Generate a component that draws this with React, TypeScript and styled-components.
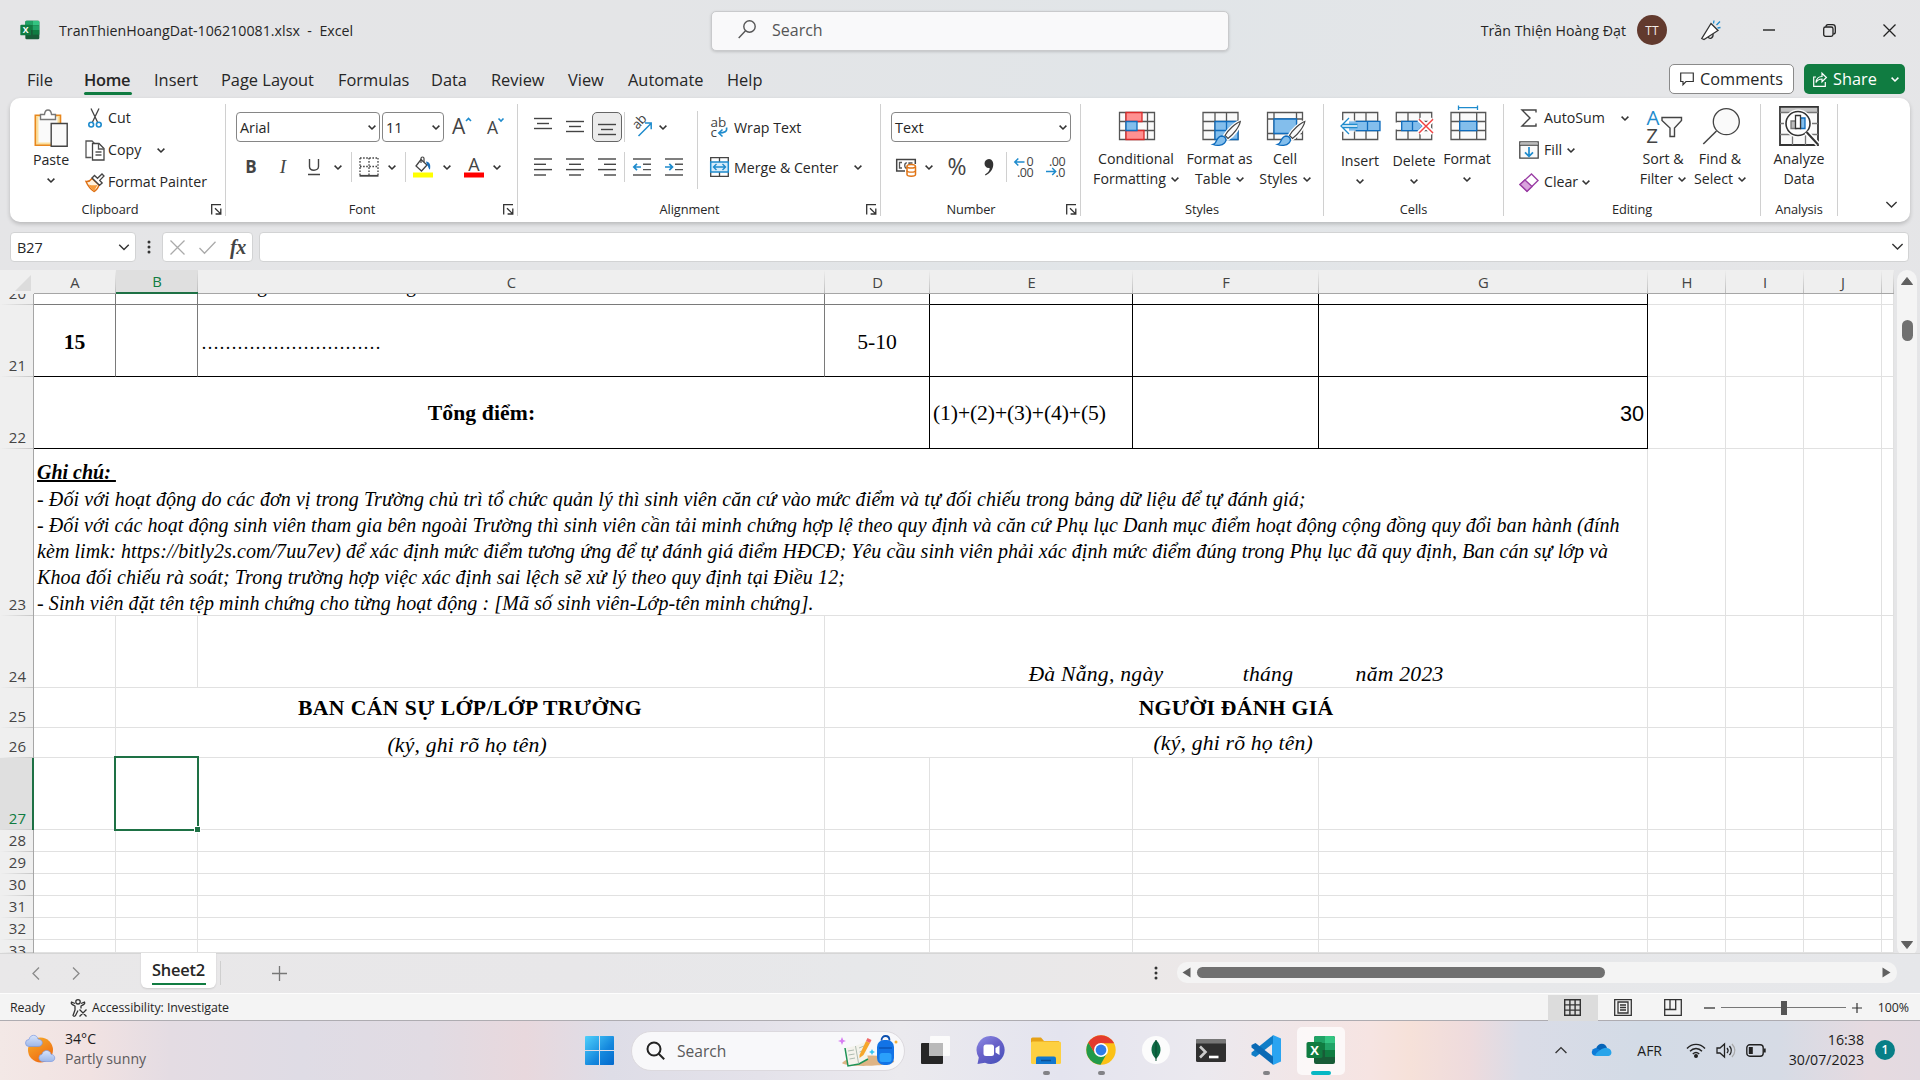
import React from "react";
import styled, { createGlobalStyle, css } from "styled-components";

const UI = `"Open Sans", "Noto Sans", sans-serif`;
const SERIF = `"Liberation Serif", "Times New Roman", serif`;
const SANS = `"Liberation Sans", Arial, sans-serif`;
const GREEN = "#107c41";
const INK = "#262626";
const BLUE = "#1e8bcd";
const FILL_BLUE = "#83beec";
const EDGE_BLUE = "#0f6cbd";

const GlobalStyle = createGlobalStyle`
  *, *::before, *::after { box-sizing: border-box; }
  body { margin: 0; background: #e5e6e8; overflow: hidden; }
  svg { display: block; flex: none; overflow: visible; }
`;

const Screen = styled.div`
  width: 1920px;
  height: 1080px;
  display: flex;
  flex-direction: column;
  font-family: ${UI};
  color: ${INK};
  background: linear-gradient(100deg, #e5e5e7 0%, #e4e5e7 30%, #e1e5e8 55%, #e5e6e8 80%, #e5e5e7 100%);
`;

/* ---------- shared pieces ---------- */

const Slot = styled.div<{ $w: number }>`
  width: ${(p) => p.$w}px;
  flex: none;
  height: 30px;
  display: flex;
  align-items: center;
  justify-content: center;
`;

type ChevronProps = { size?: number; color?: string; w?: number; up?: boolean };

const Chevron = ({ size = 8, color = "#333", w = 1.5, up }: ChevronProps) => (
  <svg width={size} height={size / 2 + 1} viewBox="0 0 8 5" fill="none" stroke={color} strokeWidth={(w * 8) / size}>
    <path d={up ? "M0.6 4.4 4 1 7.4 4.4" : "M0.6 0.6 4 4 7.4 0.6"} />
  </svg>
);

/* ---------- title bar ---------- */

const TitleBar = styled.header`
  height: 62px;
  flex: none;
  display: grid;
  grid-template-columns: 711px 518px 1fr;
  align-items: center;
  padding-bottom: 2px;
`;

const FileName = styled.div`
  display: flex;
  align-items: center;
  gap: 19px;
  padding-left: 20px;
  font-size: 14.2px;
  letter-spacing: 0.03px;
  white-space: pre;
`;

const SearchBox = styled.div`
  height: 40px;
  margin-top: 1px;
  display: flex;
  align-items: center;
  gap: 16px;
  padding: 0 0 2px 26px;
  border: 1px solid #c9cacc;
  border-radius: 5px;
  background: #f9f9fa;
  box-shadow: 0 1px 3px rgba(0, 0, 0, 0.16);
  font-size: 16px;
  color: #555;
`;

const WindowTools = styled.div`
  display: flex;
  align-items: center;
  justify-content: flex-end;
  font-size: 14.2px;
  letter-spacing: 0.04px;
  padding-right: 24px;
`;

const Avatar = styled.span`
  width: 30px;
  height: 30px;
  margin: 0 34px 0 11px;
  border-radius: 50%;
  background: #623a2e;
  color: #f4ece8;
  font-size: 12px;
  display: flex;
  align-items: center;
  justify-content: center;
`;

const WindowButton = styled.span<{ $gap: number }>`
  display: flex;
  margin-left: ${(p) => p.$gap}px;
`;

/* ---------- tab strip ---------- */

const TabStrip = styled.nav`
  height: 36px;
  flex: none;
  display: flex;
  align-items: flex-start;
  padding: 2px 15px 0 27px;
`;

const Tab = styled.span<{ $active?: boolean; $w: number }>`
  width: ${(p) => p.$w}px;
  height: 32px;
  padding-top: 5px;
  font-size: 16.4px;
  line-height: 22px;
  white-space: nowrap;
  font-weight: ${(p) => (p.$active ? 600 : 400)};
  letter-spacing: ${(p) => (p.$active ? "-0.3px" : "0")};
  ${(p) =>
    p.$active &&
    css`
      &::after {
        content: "";
        display: block;
        width: 48px;
        height: 3px;
        margin-top: 1px;
        border-radius: 2px;
        background: ${GREEN};
      }
    `}
`;

const CommentsButton = styled.button`
  width: 125px;
  height: 30px;
  margin: 0 10px 0 auto;
  padding: 0;
  display: flex;
  align-items: center;
  justify-content: center;
  gap: 6px;
  border: 1px solid #8a8a8a;
  border-radius: 5px;
  background: #fff;
  color: ${INK};
  font: 16.3px ${UI};
`;

const ShareButton = styled(CommentsButton)`
  width: 101px;
  margin: 0;
  padding-left: 3px;
  border: 0;
  background: ${GREEN};
  color: #fff;
  & > svg:last-child { margin-left: 8px; }
`;

/* ---------- ribbon ---------- */

const Ribbon = styled.section`
  height: 124px;
  flex: none;
  margin: 0 10px;
  padding-top: 6px;
  display: flex;
  border-radius: 10px;
  background: #fff;
  box-shadow: 0 2px 4px rgba(0, 0, 0, 0.2);
  font-size: 14.2px;
`;

const Group = styled.div<{ $w: number }>`
  width: ${(p) => p.$w}px;
  height: 112px;
  flex: none;
  display: flex;
  flex-direction: column;
  border-right: 1px solid #d0d0d0;
`;

const GroupBody = styled.div<{ $pl?: number }>`
  height: 97px;
  flex: none;
  display: flex;
  padding-left: ${(p) => p.$pl ?? 0}px;
`;

const GroupFooter = styled.div<{ $pl?: number }>`
  display: flex;
  height: 15px;
  align-items: center;
  padding-left: ${(p) => p.$pl ?? 0}px;
  font-size: 12.8px;
  letter-spacing: -0.1px;
  line-height: 15px;
  span { flex: 1; text-align: center; padding-top: 2px; }
  svg { margin: 2px 3px 0 5px; }
`;

const Stack = styled.div`
  padding-top: 8px;
  display: flex;
  flex-direction: column;
  gap: 10px;
`;

const Line = styled.div`
  height: 30px;
  display: flex;
  align-items: center;
  white-space: nowrap;
`;

const SmallList = styled.div<{ $w?: number }>`
  width: ${(p) => (p.$w ? p.$w + "px" : "auto")};
  display: flex;
  flex-direction: column;
  gap: 4px;
`;

const SmallRow = styled.div<{ $gap: number; $chev?: number }>`
  height: 28px;
  display: flex;
  align-items: center;
  white-space: nowrap;
  & > span { margin-left: ${(p) => p.$gap}px; padding-bottom: 2px; }
  & > span + svg { margin-left: ${(p) => p.$chev ?? 8}px; }
`;

const IconBox = styled.div`
  width: 22px;
  display: flex;
  justify-content: center;
`;

const BigButton = styled.div<{ $w: number; $drop?: number }>`
  width: ${(p) => p.$w}px;
  flex: none;
  display: flex;
  flex-direction: column;
  align-items: center;
  line-height: 20px;
  white-space: nowrap;
  & > svg:first-child { margin-bottom: ${(p) => 1 + (p.$drop ?? 0)}px; }
`;

const BigLine = styled.span`
  height: 20px;
  display: flex;
  align-items: center;
  gap: 5px;
`;

const Combo = styled.div<{ $w: number }>`
  width: ${(p) => p.$w}px;
  height: 30px;
  display: flex;
  align-items: center;
  justify-content: space-between;
  padding: 0 3px 0 3px;
  border: 1px solid #868686;
  border-radius: 4px;
  font-size: 14.4px;
  & + & { margin-left: 2px; }
`;

const Divider = styled.i<{ $h?: number }>`
  width: 1px;
  height: ${(p) => p.$h ?? 30}px;
  background: #d0d0d0;
`;

const TallDivider = styled(Slot)`
  height: 92px;
`;

const Pressed = styled.div`
  width: 30px;
  height: 30px;
  display: flex;
  align-items: center;
  justify-content: center;
  border: 1px solid #666;
  border-radius: 5px;
  background: #ebebeb;
`;

const Glyph = styled.span<{ $size: number; $weight?: number; $italic?: boolean; $serif?: boolean }>`
  font-family: ${(p) => (p.$serif ? SERIF : UI)};
  font-size: ${(p) => p.$size}px;
  font-weight: ${(p) => p.$weight ?? 400};
  font-style: ${(p) => (p.$italic ? "italic" : "normal")};
  line-height: 1;
  color: #444;
  padding-bottom: 2px;
`;

const CollapseSpot = styled.div`
  flex: 1;
  display: flex;
  align-items: flex-end;
  justify-content: flex-end;
  padding: 0 12px 14px 0;
`;

/* ---------- formula bar ---------- */

const FormulaBar = styled.div`
  height: 48px;
  flex: none;
  display: flex;
  padding: 10px 11px 0 10px;
`;

const Field = styled.div<{ $w?: number }>`
  ${(p) => (p.$w ? `width: ${p.$w}px;` : "flex: 1;")}
  height: 30px;
  display: flex;
  align-items: center;
  border: 1px solid #d2d3d4;
  border-radius: 4px;
  background: #fff;
`;

const NameBox = styled(Field)`
  justify-content: space-between;
  padding: 0 5px 0 6px;
  font-size: 14.4px;
`;

const FxBox = styled(Field)`
  padding-left: 7px;
  margin-right: 6px;
  gap: 14px;
`;

const FormulaInput = styled(Field)`
  justify-content: flex-end;
  padding-right: 4px;
`;

const Fx = styled.span`
  font: italic 700 20px ${SERIF};
  letter-spacing: -0.5px;
  color: #444;
`;

/* ---------- sheet ---------- */

const Workspace = styled.div`
  height: 683px;
  flex: none;
  display: flex;
`;

const COLS = [34, 82, 82, 627, 105, 203, 186, 329, 78, 78, 78, 12];
const ROWS = [24, 11, 72, 72, 167, 72, 40, 30, 72, 22, 22, 22, 22, 22, 13];

const Sheet = styled.div`
  width: 1894px;
  flex: none;
  display: grid;
  grid-template-columns: ${COLS.map((c) => c + "px").join(" ")};
  grid-template-rows: ${ROWS.map((r) => r + "px").join(" ")};
  background: #fff;
`;

const ColHead = styled.div<{ $on?: boolean }>`
  display: flex;
  align-items: center;
  justify-content: center;
  font-size: 14.8px;
  line-height: 20px;
  color: ${(p) => (p.$on ? GREEN : "#444")};
  background:
    linear-gradient(to bottom, transparent, #bdbdbd) right / 1px 100% no-repeat,
    ${(p) => (p.$on ? "#dfdfdf" : "#efefef")};
  border-bottom: ${(p) => (p.$on ? "2px solid #1e7145" : "1px solid #a6a6a6")};
`;

const RowHead = styled.div<{ $on?: boolean; $top?: boolean }>`
  grid-column: 1;
  display: flex;
  align-items: ${(p) => (p.$top ? "flex-start" : "flex-end")};
  justify-content: flex-end;
  overflow: hidden;
  padding-right: ${(p) => (p.$on ? 6 : 7)}px;
  padding-bottom: ${(p) => (p.$top ? 0 : 2)}px;
  font-size: 15px;
  line-height: 20px;
  color: ${(p) => (p.$on ? GREEN : "#444")};
  background:
    linear-gradient(to right, transparent, #c6c6c6) bottom / 100% 1px no-repeat,
    ${(p) => (p.$on ? "#dfdfdf" : "#efefef")};
  border-right: ${(p) => (p.$on ? "2px solid #1e7145" : "1px solid #a6a6a6")};
`;

const Corner = styled.div`
  display: flex;
  align-items: flex-end;
  justify-content: flex-end;
  padding: 0 3px 3px 0;
  background: #efefef;
`;

type CellProps = {
  $c: number;
  $r: number;
  $span?: number;
  $right?: string;
  $bottom?: string;
  $font?: string;
  $align?: string;
  $valign?: string;
  $track?: number;
  $pt?: number;
};

const Cell = styled.div<CellProps>`
  grid-column: ${(p) => p.$c} / span ${(p) => p.$span ?? 1};
  grid-row: ${(p) => p.$r};
  position: relative;
  min-width: 0;
  display: flex;
  align-items: ${(p) => p.$valign ?? "center"};
  justify-content: ${(p) => p.$align ?? "center"};
  padding: ${(p) => p.$pt ?? 0}px 3px 0;
  border-right: 1px solid ${(p) => p.$right ?? "#e1e1e1"};
  border-bottom: 1px solid ${(p) => p.$bottom ?? "#e1e1e1"};
  font: ${(p) => p.$font ?? `21.67px ${SERIF}`};
  letter-spacing: ${(p) => p.$track ?? 0}px;
  color: #000;
  white-space: pre;
`;

const Notes = styled.div`
  align-self: flex-end;
  margin-bottom: -1px;
  font: italic 20px/26px ${SERIF};
`;

const NoteTitle = styled.p`
  margin: 0;
  font-weight: 700;
  line-height: 28px;
  text-decoration: underline;
`;

const NoteLine = styled.p<{ $track: number }>`
  margin: 0;
  letter-spacing: ${(p) => p.$track}px;
`;

const ClippedText = styled.div`
  align-self: flex-start;
  height: 3px;
  overflow: hidden;
  display: flex;
  align-items: flex-end;
  gap: 139px;
  padding-left: 56px;
  font-size: 20px;
  line-height: 24px;
  margin-right: auto;
`;

const Selection = styled.div`
  position: absolute;
  left: -2px;
  top: -2px;
  width: 85px;
  height: 75px;
  border: 2px solid #1e7145;
  &::after {
    content: "";
    position: absolute;
    right: -4px;
    bottom: -4px;
    width: 7px;
    height: 7px;
    border: 1px solid #fff;
    background: #1e7145;
  }
`;

const VScroll = styled.div`
  width: 20px;
  height: 687px;
  margin-left: 3px;
  padding: 7px 0 8px;
  display: flex;
  flex-direction: column;
  align-items: center;
  border-radius: 10px;
  background: #f4f4f4;
`;

const VThumb = styled.i`
  width: 11px;
  height: 21px;
  margin: 35px 0 auto;
  border-radius: 6px;
  background: #707070;
`;

/* ---------- sheet tabs ---------- */

const SheetBar = styled.div`
  height: 40px;
  flex: none;
  display: flex;
  padding-right: 23px;
  border-top: 1px solid #d6d6d6;
  background: linear-gradient(90deg, #e9e8e9, #e8e7e9 30%, #e7e8ea 45%, #ece8e8 63%, #e7e8ea 78%, #e6e7ea);
`;

const SheetNav = styled.div`
  width: 141px;
  display: flex;
  align-items: center;
  gap: 32px;
  padding-left: 32px;
`;

const SheetTab = styled.div`
  width: 75px;
  height: 35px;
  margin-top: -1px;
  display: flex;
  flex-direction: column;
  align-items: center;
  padding-top: 6px;
  border-radius: 0 0 6px 6px;
  background: #fff;
  box-shadow: 0 1px 2px rgba(0, 0, 0, 0.12);
  font-size: 16.4px;
  font-weight: 600;
  letter-spacing: -0.2px;
  line-height: 22px;
  &::after {
    content: "";
    width: 54px;
    height: 2px;
    margin-top: 2px;
    background: ${GREEN};
  }
`;

const TabDivider = styled.i`
  width: 1px;
  height: 24px;
  margin: 7px 51px 0 4px;
  background: #cfcfcf;
`;

const AddSheet = styled.div`
  width: 16px;
  height: 38px;
  display: flex;
  align-items: center;
`;

const HDots = styled.div`
  margin: 0 19px 1px auto;
  display: flex;
  align-items: center;
`;

const HScroll = styled.div`
  width: 720px;
  height: 21px;
  margin-top: 8px;
  padding: 0 6px 0 5px;
  display: flex;
  align-items: center;
  border-radius: 10px;
  background: #f4f4f4;
`;

const HThumb = styled.i`
  width: 408px;
  height: 11px;
  margin: 0 auto 0 6px;
  border-radius: 6px;
  background: #707070;
`;

/* ---------- status bar ---------- */

const StatusBar = styled.footer`
  height: 28px;
  flex: none;
  display: flex;
  align-items: center;
  padding: 1px 11px 0 10px;
  border-top: 1px solid #fdfdfd;
  border-bottom: 1px solid #aeacb1;
  background: #f4f4f4;
  font-size: 12.4px;
  letter-spacing: -0.05px;
`;

const Ready = styled.span`
  width: 60px;
`;

const Accessibility = styled.span`
  margin: 0 auto 0 4px;
`;

const ViewMode = styled.div<{ $on?: boolean }>`
  width: 50px;
  height: 26px;
  display: flex;
  align-items: center;
  justify-content: center;
  padding-right: 1px;
  background: ${(p) => (p.$on ? "#dcdcdc" : "transparent")};
`;

const ZoomTrack = styled.div`
  width: 125px;
  height: 1px;
  margin: 0 6px;
  display: flex;
  align-items: center;
  justify-content: center;
  background: #777;
  i { width: 6px; height: 14px; background: #555; }
`;

const ZoomMinus = styled.div`
  margin-left: 6px;
`;

const ZoomValue = styled.span`
  width: 47px;
  text-align: right;
`;

/* ---------- taskbar ---------- */

const Taskbar = styled.div`
  height: 59px;
  flex: none;
  display: flex;
  align-items: center;
  background: linear-gradient(
    90deg, #f3e8e6 0, #f1e2e2 90px, #e4dce3 170px, #dfdce5 300px, #e1dbe3 430px, #e8d8dd 525px,
    #dedde7 610px, #e4e2ea 760px, #ebeaee 900px, #e4e4ef 1060px, #ebe9ef 1200px, #f6e4e2 1370px, #f6e1d9 1410px,
    #eedbdd 1470px, #dadce7 1520px, #d3dbe6 1640px, #d6dbe5 1780px, #e6dae0 1870px, #e3dae1 1920px
  );
`;

const Weather = styled.div`
  width: 585px;
  display: flex;
  align-items: center;
  gap: 10px;
  padding: 0 0 3px 25px;
  font-size: 14.1px;
  line-height: 20px;
  color: #1d1d1d;
  p { margin: 0; }
  p + p { color: #5c5a5c; }
`;

const TaskSearch = styled.div`
  width: 274px;
  height: 40px;
  margin: 0 7px 0 17px;
  padding: 0 6px 0 14px;
  display: flex;
  align-items: center;
  gap: 12px;
  border: 1px solid #dcd9de;
  border-radius: 20px;
  background: #f8f8fa;
  font-size: 15.6px;
  color: #5a5a5a;
  & > svg:last-child { margin-left: auto; }
`;

const TaskItem = styled.div<{ $active?: boolean; $mark?: string }>`
  width: 48px;
  height: 48px;
  margin-right: 7px;
  display: flex;
  flex-direction: column;
  align-items: center;
  justify-content: flex-end;
  border-radius: 5px;
  background: ${(p) => (p.$active ? "rgba(255,255,255,0.72)" : "transparent")};
  & > svg { margin-bottom: 6px; }
  &::after {
    content: "";
    width: ${(p) => (p.$active ? 20 : 7)}px;
    height: 3.5px;
    border-radius: 2px;
    background: ${(p) => p.$mark ?? "transparent"};
  }
`;

const Tray = styled.div`
  flex: 1;
  display: flex;
  align-items: center;
  justify-content: flex-end;
  gap: 10px;
  padding: 0 25px 1px 0;
  font-size: 14px;
  color: #1c1c1c;
`;

const TrayCloud = styled.span`
  margin-left: 13px;
`;

const Language = styled.span`
  margin: 0 14px 0 15px;
`;

const Clock = styled.div`
  margin: 0 1px 1px 2px;
  width: 86px;
  text-align: right;
  line-height: 20px;
  font-size: 14.2px;
`;

const Badge = styled.div`
  width: 20px;
  height: 20px;
  border-radius: 50%;
  background: #087f87;
  color: #fff;
  font-size: 12px;
  font-weight: 600;
  line-height: 20px;
  text-align: center;
`;

/* ---------- icons ---------- */

const ExcelIcon = ({ size }: { size: number }) => (
  <svg width={size} height={size} viewBox="0 0 30 30">
    <rect x="8" y="1" width="21" height="28" rx="2" fill="#185c37" />
    <path d="M10 1h9v7H8V3a2 2 0 0 1 2-2z" fill="#21a366" />
    <path d="M19 1h8a2 2 0 0 1 2 2v5H19z" fill="#33c481" />
    <path d="M8 8h11v7H8z" fill="#107c41" />
    <path d="M19 8h10v7H19z" fill="#21a366" />
    <path d="M19 15h10v7H19z" fill="#107c41" />
    <rect x="0.5" y="7" width="16" height="16" rx="1.8" fill="#107c41" />
    <text x="8.5" y="19.6" fontSize="13" fontWeight="700" fill="#fff" textAnchor="middle" fontFamily="Open Sans, sans-serif">X</text>
  </svg>
);

const Launcher = () => (
  <svg width="11" height="11" viewBox="0 0 11 11" fill="none" stroke="#333" strokeWidth="1.3">
    <path d="M0.7 10.5V0.7H10M4 4.2 9.2 9.4M9.8 4.5V10H4.6" />
  </svg>
);

const PasteIcon = () => (
  <svg width="36" height="44" viewBox="-1 -4 36 44" fill="none">
    <path d="M1.3 7.2h25.2v30H1.3z" fill="#fbdf9d" stroke="#e8871e" strokeWidth="1.6" />
    <path d="M4.500 9h19v25.500h-19z" fill="#fafafa" />
    <path d="M6.500 11.500V6.500h4c.5-6 6.500-6 7 0h4v5z" fill="#fff" stroke="#777" strokeWidth="1.400" />
    <path d="M17.200 15.500h16v22.700h-16z" fill="#fafafa" stroke="#444" strokeWidth="1.400" />
  </svg>
);

const CutIcon = () => (
  <svg width="14" height="20" viewBox="0 0 14 20" fill="none" strokeWidth="1.300">
    <path d="M3 0.500 9.500 14M11 0.500 4.500 14" stroke="#444" />
    <circle cx="3.200" cy="16.600" r="2.400" stroke={BLUE} strokeWidth="1.600" />
    <circle cx="10.800" cy="16.600" r="2.400" stroke={BLUE} strokeWidth="1.600" />
  </svg>
);

const CopyIcon = () => (
  <svg width="20" height="21" viewBox="0 0 20 21" fill="none" stroke="#555" strokeWidth="1.300">
    <path d="M6.500 17.500H1V1h6l3 3" />
    <path d="M7.500 3.500h6.500l5 5V20H7.500z" fill="#fff" stroke="#444" />
    <path d="M13.500 3.500v5.500H19M10.500 12h6M10.500 15h6" />
  </svg>
);

const PainterIcon = () => (
  <svg width="20" height="19" viewBox="0 0 20 19" fill="none">
    <path d="M1 8.500C4 9 5.500 7.500 7 5.500l7 6.500c-1 3-3 5.500-5 6.500C6 16.500 2.500 12 1 8.500z" fill="#fff3e0" stroke="#dd6f14" strokeWidth="1.400" />
    <path d="M3.500 11.500c3 1 6 1 9 .500L9 18c-2-1.500-4-4-5.500-6.500z" fill="#f59a3a" />
    <path d="M7 5l2.500-2.500 3 2.800L17 1l2 2-4.300 4.400 2.500 2.600-2.700 2.300z" fill="#fff" stroke="#444" strokeWidth="1.300" />
  </svg>
);

const GrowFont = ({ down }: { down?: boolean }) => (
  <svg width="20" height="20" viewBox="0 0 20 20" fill="none">
    <text x={down ? 2 : 0} y={17} fontSize={down ? 17.5 : 21} fill="#444" fontFamily="Open Sans, sans-serif">A</text>
    <path d={down ? "M13.500 1.500 16 4 18.500 1.500" : "M14 4 16.500 1.500 19 4"} stroke={BLUE} strokeWidth="1.600" />
  </svg>
);

const BordersIcon = () => (
  <svg width="20" height="20" viewBox="0 0 20 20" fill="none" stroke="#444">
    <path d="M1 1h18M1 1v17M19 1v17M10 1v17M1 9.500h18" strokeDasharray="1.600 1.500" strokeWidth="1.300" />
    <path d="M0.500 18.800h19" strokeWidth="1.800" />
  </svg>
);

const FillColorIcon = () => (
  <svg width="20" height="22" viewBox="0 0 20 22" fill="none">
    <path d="M8 3.500 14 9l-5.500 6L3 10z" fill="#fff" stroke="#444" strokeWidth="1.300" />
    <path d="M8 7V2.500c0-2 3-2 3 0V6" stroke="#444" strokeWidth="1.200" />
    <path d="M13 5.500c3.500.5 5 2.500 4 8-1.800-.5-1.500-3.500-3-4.500z" fill="#1d6fb8" />
    <rect x="0" y="16.500" width="20" height="5" fill="#ffff00" />
  </svg>
);

const FontColorIcon = () => (
  <svg width="20" height="22" viewBox="0 0 20 22">
    <text x="10" y="14.500" fontSize="18" fill="#444" textAnchor="middle" fontFamily="Open Sans, sans-serif">A</text>
    <rect x="0" y="16.500" width="20" height="5" fill="#f00" />
  </svg>
);

const Bars = ({ rows, dy = 0 }: { rows: [number, number, number][]; dy?: number }) => (
  <svg width="18" height="18" viewBox="0 0 18 18" stroke="#444" strokeWidth="1.400">
    {rows.map(([x1, x2, y]) => (
      <path key={y} d={`M${x1} ${y + dy}H${x2}`} />
    ))}
  </svg>
);

const threeBars: [number, number, number][] = [[0, 18, 3.5], [3, 15, 8.5], [0, 18, 13.5]];

const OrientIcon = () => (
  <svg width="20" height="20" viewBox="0 0 20 20" fill="none">
    <g transform="translate(5.500 13) rotate(-47)">
      <text x="0" y="0" fontSize="13" fill="#444" fontFamily="Open Sans, sans-serif" letterSpacing="-0.500">ab</text>
    </g>
    <path d="M6.500 19 19 6.500M13 6h6.200v6.200" stroke={BLUE} strokeWidth="1.500" />
  </svg>
);

const IndentIcon = ({ right }: { right?: boolean }) => (
  <svg width="18" height="18" viewBox="0 0 18 18" fill="none" stroke="#555" strokeWidth="1.400">
    <path d="M0 1h18M10 6.300h8M10 11.600h8M0 17h18" />
    <path d={right ? "M0 9h7M4.300 5.800 7.500 9l-3.200 3.200" : "M8 9H1M4 5.800.8 9 4 12.200"} stroke={BLUE} strokeWidth="1.700" />
  </svg>
);

const WrapIcon = () => (
  <svg width="18" height="21" viewBox="0 0 18 21" fill="none">
    <g fill="#444" fontSize="13.500" fontFamily="Open Sans, sans-serif">
      <text x="0.500" y="9.500">ab</text>
      <text x="0.500" y="19.500">c</text>
    </g>
    <path d="M16.500 10.500c1 4-2 5.500-7.500 5.500M12.500 12.500 8.800 16l3.700 3.500" stroke={BLUE} strokeWidth="1.600" />
  </svg>
);

const MergeIcon = () => (
  <svg width="19" height="20" viewBox="0 0 19 20" fill="none" stroke="#444" strokeWidth="1.300">
    <path d="M.7.700h17.600v18.600H.7zM9.500.700v4.800M9.500 14.500v4.800" />
    <path d="M.7 5h17.600v10H.7z" fill="#d8ecfa" stroke={BLUE} strokeWidth="1.500" />
    <path d="M3.500 10h12M6.500 7 3.500 10l3 3M12.500 7l3 3-3 3" stroke={BLUE} strokeWidth="1.400" />
  </svg>
);

const CurrencyIcon = () => (
  <svg width="20" height="19" viewBox="0 0 20 19" fill="none">
    <path d="M9 13H.7V1.500h18.600V6" stroke="#444" strokeWidth="1.500" />
    <path d="M6 4.500H3.500v5.500H6M11 5c-3-1-3 6 0 5M13 9V5h3.500" stroke="#555" strokeWidth="1.300" />
    <path d="M11 8.500v8c0 2.200 8.500 2.200 8.500 0v-8" fill="#fff" stroke="#e07415" strokeWidth="1.500" />
    <ellipse cx="15.200" cy="8.300" rx="4.200" ry="1.800" fill="#fff" stroke="#e07415" strokeWidth="1.500" />
    <path d="M11 12.500c0 2.200 8.500 2.200 8.500 0" stroke="#e07415" strokeWidth="1.400" />
  </svg>
);

const DecimalIcon = ({ less }: { less?: boolean }) => (
  <svg width="20" height="20" viewBox="0 0 20 20" fill="none">
    <g fill="#444" fontSize="12.500" fontFamily="Open Sans, sans-serif" letterSpacing="-0.500">
      <text x={less ? 3 : 12.5} y="9">{less ? ".00" : "0"}</text>
      <text x={less ? 9.5 : 3} y="19.500">{less ? ".0" : ".00"}</text>
    </g>
    <path
      d={less ? "M0 14.500h9.500M6.200 11l3.500 3.500L6.200 18" : "M10.500 5H1M4.300 1.500.8 5l3.500 3.500"}
      stroke={BLUE}
      strokeWidth="1.500"
    />
  </svg>
);

const BigSvg = ({ children }: { children: React.ReactNode }) => (
  <svg width="44" height="44" viewBox="0 0 44 44" fill="none" stroke="#555" strokeWidth="1.300">
    {children}
  </svg>
);

const Brush = ({ dx = 0 }: { dx?: number }) => (
  <g transform={`translate(${dx} 0)`}>
    <path d="M42 17.500c-4 1-12 8-15.500 14l3.500 3.500c6-4 11.500-11 12.500-16.500z" fill="#fff" stroke="#fff" strokeWidth="3" />
    <path d="M42.300 17.500c-4.500 1.500-12.300 8.500-15.300 14l3 3c5.500-4 11.500-12 12.300-17z" fill="#fafafa" stroke="#444" strokeWidth="1.200" />
    <path d="M15 40.500c4-.5 3-8 8.500-8.500 4 0 6 4 3 7-2.500 2.800-8 3-11.500 1.500z" fill={FILL_BLUE} stroke={EDGE_BLUE} />
  </g>
);

const CondFormatIcon = () => (
  <BigSvg>
    <path d="M5.500 8.500h35v27h-35zM5.500 17.500h35M5.500 26.500h35M12 8.500v27M33.500 8.500v27" fill="#fafafa" />
    <path d="M12 8.500h16v9H12zM12 26.500h18v9H12z" fill="#ff9090" stroke="#d92b2b" />
    <path d="M12 17.500h11v9H12z" fill={FILL_BLUE} stroke={EDGE_BLUE} />
  </BigSvg>
);

const TableIcon = () => (
  <BigSvg>
    <path d="M5 8.500h35v27H5zM5 17.500h35M5 26.500h35M17 8.500v27M28.500 8.500v27" fill="#fafafa" />
    <path d="M17 17.500h23v18H17z" fill={FILL_BLUE} stroke={EDGE_BLUE} />
    <path d="M17 26.500h23M28.500 17.500v18" stroke={EDGE_BLUE} />
    <Brush />
  </BigSvg>
);

const CellStylesIcon = () => (
  <BigSvg>
    <path d="M4.500 8.500h35v27h-35zM4.500 15h35M4.500 29.500h35M11 8.500v27M33.500 8.500v27" fill="#fafafa" />
    <path d="M11 15h22.500v14.500H11z" fill={FILL_BLUE} stroke={EDGE_BLUE} />
    <Brush dx={-0.5} />
  </BigSvg>
);

const InsertIcon = () => (
  <BigSvg>
    <path d="M4.700 8.500h35v27h-35zM4.700 17.500h35M4.700 26.500h35M16.500 8.500v27M28 8.500v27" fill="#fafafa" />
    <path d="M2 17h14v10H2z" fill="#fff" stroke="#fff" />
    <path d="M11 17.300h31v9.400H11z" fill={FILL_BLUE} stroke="none" />
    <path d="M18 17.300h24v9.400H18M29.500 17.300v9.400" stroke={EDGE_BLUE} />
    <path d="M19 22H3.500M11 14l-8 8 8 8" stroke="#fff" strokeWidth="4" />
    <path d="M19.500 20.500H5M19.500 23.500H5M11 14l-8 8 8 8" stroke={BLUE} />
  </BigSvg>
);

const DeleteIcon = () => (
  <BigSvg>
    <path d="M4.300 8.500h35.400v27H4.300zM4.300 17.500h35.400M4.300 26.500h35.400M16 8.500v27M28 8.500v27" fill="#fafafa" />
    <path d="M1 18.500h8v7H1z" fill="#fff" stroke="none" />
    <path d="M9.700 17.300h17l4 4.700-4 4.700h-17zM20.500 17.300v9.400" fill={FILL_BLUE} stroke={EDGE_BLUE} />
    <path d="M27 15.300 41 29M41 15.300 27 29" stroke="#fff" strokeWidth="5" />
    <path d="M27 15.300 41 29M41 15.300 27 29" stroke="#f04545" strokeWidth="1.500" />
  </BigSvg>
);

const FormatIcon = () => (
  <BigSvg>
    <path d="M6 8.500h34.700v27H6zM6 17.500h34.700M6 26.500h34.700M14.700 8.500v27M31.700 8.500v27" fill="#fafafa" />
    <path d="M14.700 17.300h17v9.400h-17z" fill={FILL_BLUE} stroke={EDGE_BLUE} />
    <path d="M13.500 3.700h19M13.500 1.500v4.400M32.500 1.500v4.400" stroke={BLUE} />
  </BigSvg>
);

const SortIcon = () => (
  <BigSvg>
    <g stroke="none" fontFamily="Open Sans, sans-serif" fontSize="20.500">
      <text x="5.500" y="21" fill={BLUE}>A</text>
      <text x="5.300" y="38.500" fill="#444">Z</text>
    </g>
    <path d="M21 13.500h19.500v3l-7 7.500v8.500h-4.500V24l-8-7.500z" fill="#fafafa" stroke="#444" strokeWidth="1.400" />
  </BigSvg>
);

const FindIcon = () => (
  <BigSvg>
    <circle cx="28.300" cy="17.700" r="13" fill="#fafafa" stroke="#444" />
    <path d="M18.500 27 5.300 40" stroke="#444" strokeWidth="1.500" />
  </BigSvg>
);

const AnalyzeIcon = () => (
  <BigSvg>
    <path d="M3 3h38v38H3z" fill="#fafafa" stroke="#333" strokeWidth="1.800" />
    <path d="M3.800 3.800h36.400V8H3.800z" fill="#c4c4c4" stroke="none" />
    <path d="M3 8.500h38M3 19.500h38M3 30.500h38M15.500 30v11M28.500 30v11" stroke="#777" />
    <circle cx="21" cy="19.500" r="14" fill="#fff" stroke="none" />
    <circle cx="21" cy="19.500" r="12" fill="#fff" stroke="#333" strokeWidth="1.600" />
    <path d="m29.500 28 11.500 12.500" stroke="#fff" strokeWidth="5" />
    <path d="m29.500 28 11.500 12.500" stroke="#333" strokeWidth="2" />
    <path d="M14 17h5v7.500h-5z" fill="#bbb" stroke="#777" />
    <path d="M23.500 14h4.500v10.500h-4.500z" fill={FILL_BLUE} stroke={EDGE_BLUE} />
    <path d="M18.500 11.500h5v13h-5z" fill="#fff" stroke="#333" />
  </BigSvg>
);

const SumIcon = () => (
  <svg width="16" height="18" viewBox="0 0 16 18" fill="none" stroke="#444" strokeWidth="1.400">
    <path d="M15 3.500V1H1l8 8-8 8h14v-2.500" />
  </svg>
);

const FillIcon = () => (
  <svg width="20" height="18" viewBox="0 0 20 18" fill="none">
    <path d="M.8.800h18.400v16.400H.8z" fill="#fafafa" stroke="#444" strokeWidth="1.300" />
    <path d="M1.500 1.500h17V4h-17z" fill="#bbb" />
    <path d="M.8 4.300h18.400" stroke="#444" />
    <path d="M10 6v9M6 11.300l4 4 4-4" stroke={BLUE} strokeWidth="1.700" />
  </svg>
);

const ClearIcon = () => (
  <svg width="20" height="19" viewBox="0 0 20 19" fill="none" stroke="#9b3fa5" strokeWidth="1.400">
    <path d="M12.500 1 19 7.500 8 18.200 1 11.500z" fill="#fff" />
    <path d="M6 7 13 13.500 8 18.200 1 11.500z" fill="#d9a3dd" />
  </svg>
);

const WeatherIcon = () => (
  <svg width="30" height="28" viewBox="0 0 30 28">
    <defs>
      <linearGradient id="sun" x1="0" y1="0" x2="0.600" y2="1">
        <stop offset="0" stopColor="#f7b02c" />
        <stop offset="1" stopColor="#ef6c12" />
      </linearGradient>
      <linearGradient id="cloud" x1="0" y1="0" x2="0" y2="1">
        <stop offset="0" stopColor="#d8e4fb" />
        <stop offset="1" stopColor="#9db7ea" />
      </linearGradient>
    </defs>
    <circle cx="15.500" cy="15" r="12.500" fill="url(#sun)" />
    <path d="M4 11.500a3.500 3.500 0 0 1 0-7C5-1 12-1 13 4c6 .5 5.500 7.500 0 7.500z" fill="url(#cloud)" stroke="#7d9adf" strokeWidth="0.700" />
    <path d="M17 26.500a3.700 3.700 0 0 1 0-7.300c1.200-5 8-5 9 0 5 .5 5 7.300 0 7.300z" fill="url(#cloud)" stroke="#7d9adf" strokeWidth="0.700" />
  </svg>
);

const WindowsIcon = () => (
  <svg width="29" height="29" viewBox="0 0 29 29">
    <defs>
      <linearGradient id="win" x1="0" y1="0" x2="1" y2="1">
        <stop offset="0" stopColor="#4fd0fb" />
        <stop offset="0.600" stopColor="#1487dd" />
        <stop offset="1" stopColor="#0469cc" />
      </linearGradient>
    </defs>
    <path d="M1 0h13v14H0V1a1 1 0 0 1 1-1zM15 0h13a1 1 0 0 1 1 1v13H15zM0 15h14v14H1a1 1 0 0 1-1-1zM15 15h14v13a1 1 0 0 1-1 1H15z" fill="url(#win)" />
  </svg>
);

const SearchArt = () => (
  <svg width="59" height="32" viewBox="0 0 59 32">
    <path d="M3 28c8-9 40-10 52-2 3 5-48 7-52 2z" fill="#deb485" />
    <path d="m6 13 10-2 10-4 3 17-9 5-11 2z" fill="#f4f3ec" />
    <path d="m6 13 3 18 11-2 9-5" fill="none" stroke="#1d9356" strokeWidth="1.500" />
    <path d="m16.500 11 3 17M9 16l6-1M9.500 20l6-1M10.500 24l5.500-1M20 13l5-2M20.500 17l5-2" stroke="#a6b6a9" strokeWidth="0.900" fill="none" />
    <path d="M20.500 20 27 6l4 2-6.500 12-4 3z" fill="#f6a62b" />
    <path d="m27 6 1.500-3 4 2-1.500 3z" fill="#f06a6a" />
    <rect x="38" y="5" width="17" height="25" rx="7" fill="#1273e6" />
    <path d="M42.500 5.500c0-6 8-6 8 0" fill="none" stroke="#0a4fae" strokeWidth="1.800" />
    <rect x="40.500" y="18" width="12" height="9" rx="2.500" fill="#2aa0fb" />
    <path d="M40 13h13" stroke="#0a4fae" strokeWidth="1.300" />
    <path d="m3 2 1.200 3L7 6l-2.800 1L3 10 1.800 7-1 6l2.800-1z" fill="#d77df2" />
    <path d="m33 14 1 2 2 1-2 1-1 2-1-2-2-1 2-1z" fill="#35c4f0" />
    <circle cx="57" cy="7" r="1.500" fill="#f3b13b" />
  </svg>
);

const TaskViewIcon = () => (
  <svg width="30" height="30" viewBox="0 0 30 30">
    <rect x="9" y="1" width="20" height="20" rx="1" fill="#fbfbfb" />
    <rect x="0" y="8" width="22" height="21" rx="1" fill="#262626" />
    <path d="M8 8h14v13H8z" fill="#b9b9b9" />
  </svg>
);

const ChatIcon = () => (
  <svg width="30" height="30" viewBox="0 0 30 30">
    <defs>
      <linearGradient id="chat" x1="0" y1="0" x2="0.700" y2="1">
        <stop offset="0" stopColor="#8d8de6" />
        <stop offset="0.500" stopColor="#6a62c9" />
        <stop offset="1" stopColor="#4b53bc" />
      </linearGradient>
    </defs>
    <path d="M15 1a14 14 0 1 1-6 26.800L1.500 29l1.300-6.500A14 14 0 0 1 15 1z" fill="url(#chat)" />
    <rect x="7.500" y="9.500" width="10.500" height="11.500" rx="2.500" fill="#fff" />
    <path d="m19.500 13 4-2.500v9.500l-4-2.500z" fill="#fff" />
  </svg>
);

const FolderIcon = () => (
  <svg width="30" height="30" viewBox="0 0 30 30">
    <path d="M0 4a1.500 1.500 0 0 1 1.500-1.500h8.500L13 6h15v6H0z" fill="#e6a117" />
    <rect x="0" y="6.500" width="30" height="22.500" rx="1.500" fill="#fdd041" />
    <path d="M5 29v-5.500a2 2 0 0 1 2-2h16a2 2 0 0 1 2 2V29z" fill="#1177cf" />
    <path d="M10 25.500h10" stroke="#0a4f94" strokeWidth="1.500" />
  </svg>
);

const ChromeIcon = () => (
  <svg width="30" height="30" viewBox="0 0 30 30">
    <circle cx="15" cy="15" r="14.700" fill="#fbc116" />
    <path d="M2.300 7.600A14.700 14.700 0 0 0 14.500 29.700L20.800 18.500H9.200z" fill="#229a4a" />
    <path d="M2.300 7.600A14.700 14.700 0 0 1 27.700 7.600L28 8.300H15L9 18.600z" fill="#e33b2e" />
    <circle cx="15" cy="15" r="7" fill="#fff" />
    <circle cx="15" cy="15" r="5.400" fill="#2f7de9" />
  </svg>
);

const MongoIcon = () => (
  <svg width="28" height="30" viewBox="0 0 28 30">
    <circle cx="14" cy="15" r="14" fill="#fcfcfc" />
    <path d="M14 5c7 7 5 14 0 19-5-5-7-12 0-19z" fill="#0f6b45" />
    <path d="M14 5v21" stroke="#0b4a30" strokeWidth="1" />
  </svg>
);

const TerminalIcon = () => (
  <svg width="30" height="30" viewBox="0 -3 30 30">
    <rect width="30" height="23" y="1" rx="1.500" fill="#303030" />
    <path d="M0 5.500V2.500A1.500 1.500 0 0 1 1.500 1h27A1.500 1.500 0 0 1 30 2.500v3z" fill="#777" />
    <path d="m4 8.500 5.500 5.500L4 19.500" fill="none" stroke="#ccc" strokeWidth="2.600" />
    <path d="M13 19h9.500" stroke="#fff" strokeWidth="2.600" />
  </svg>
);

const CodeIcon = () => (
  <svg width="30" height="30" viewBox="0 0 30 30">
    <path d="m22 0 8 3.500v23L22 30l-1-8.500V8.500z" fill="#2aa4f1" />
    <path d="M22 .300v8.200L4.500 22 .5 20v-2.500z" fill="#0f7dc7" />
    <path d="M22 29.700v-8.200L4.500 8 .5 10v2.500z" fill="#0a6ab5" />
  </svg>
);

const OneDriveIcon = () => (
  <svg width="21" height="14" viewBox="0 0 21 14">
    <path d="M5 5.500C7-1 14.500-.8 16 5l-5 4z" fill="#0664b8" />
    <path d="M4 12.800C-1 12 .2 5.500 5 5l8 4-3 4z" fill="#0d7bd8" />
    <path d="M4 13c1-4 9-9 12-8 5 .3 6.300 7.500 1.500 8z" fill="#28a4ea" />
  </svg>
);

const WifiIcon = () => (
  <svg width="20" height="15" viewBox="0 0 20 15" fill="none" stroke="#222" strokeWidth="1.400">
    <path d="M1 5.500c5-5.500 13-5.500 18 0M4 8.300c3.500-3.800 8.500-3.800 12 0M6.800 11c2-2 4.400-2 6.400 0" />
    <circle cx="10" cy="13" r="1.300" fill="#222" />
  </svg>
);

const SoundIcon = () => (
  <svg width="20" height="15" viewBox="0 0 20 15" fill="none" stroke="#222" strokeWidth="1.300">
    <path d="M1 5v5h3l4.500 4V1L4 5z" />
    <path d="M11 5c1.300 1.500 1.300 3.500 0 5M13.500 3c2.400 3 2.400 6 0 9" />
    <path d="M16 1c3.500 4 3.500 9 0 13" stroke="#aaa" />
  </svg>
);

const BatteryIcon = () => (
  <svg width="20" height="13" viewBox="0 0 20 13" fill="none">
    <rect x="0.800" y="0.800" width="16.400" height="11.400" rx="3" stroke="#222" strokeWidth="1.400" />
    <rect x="2.800" y="3" width="4" height="7" fill="#222" />
    <path d="M18.700 4.500v4" stroke="#222" strokeWidth="2" />
  </svg>
);

const Dots = () => (
  <svg width="4" height="14" viewBox="0 0 4 14" fill="#333">
    <circle cx="2" cy="2" r="1.500" /><circle cx="2" cy="7" r="1.500" /><circle cx="2" cy="12" r="1.500" />
  </svg>
);

/* ---------- sheet content ---------- */

const B = "#000";
const G = "#7a7a7a";
const boldSerif = `700 21.67px ${SERIF}`;
const italicSerif = `italic 21.67px ${SERIF}`;

const notes: [string, number][] = [
  ["- Đối với hoạt động do các đơn vị trong Trường chủ trì tổ chức quản lý thì sinh viên căn cứ vào mức điểm và tự đối chiếu trong bảng dữ liệu để tự đánh giá;", 0.105],
  ["- Đối với các hoạt động sinh viên tham gia bên ngoài Trường thì sinh viên cần tải minh chứng hợp lệ theo quy định và căn cứ Phụ lục Danh mục điểm hoạt động cộng đồng quy đổi ban hành (đính", 0.07],
  ["kèm limk: https://bitly2s.com/7uu7ev) để xác định mức điểm tương ứng để tự đánh giá điểm HĐCĐ; Yêu cầu sinh viên phải xác định mức điểm đúng trong Phụ lục đã quy định, Ban cán sự lớp và", 0.065],
  ["Khoa đối chiếu rà soát; Trong trường hợp việc xác định sai lệch sẽ xử lý theo quy định tại Điều 12;", 0.12],
  ["- Sinh viên đặt tên tệp minh chứng cho từng hoạt động : [Mã số sinh viên-Lớp-tên minh chứng].", 0.09],
];

const EmptyCells = ({ row, from, to }: { row: number; from: number; to: number }) => (
  <>
    {Array.from({ length: to - from + 1 }, (_, i) => (
      <Cell key={i} $c={from + i} $r={row} />
    ))}
  </>
);

const SheetGrid = () => (
  <Sheet>
    <Corner>
      <svg width="16" height="16" viewBox="0 0 16 16"><path d="M16 0v16H0z" fill="#dcdcdc" /></svg>
    </Corner>
    {["A", "B", "C", "D", "E", "F", "G", "H", "I", "J", ""].map((c) => (
      <ColHead key={c} $on={c === "B"}>{c}</ColHead>
    ))}
    {ROWS.slice(1).map((_, i) => (
      <RowHead key={i} $on={i === 7} $top={i === 13}>{i + 20}</RowHead>
    ))}

    <Cell $c={2} $r={2} $right={G} $bottom={G} />
    <Cell $c={3} $r={2} $right={G} $bottom={G} />
    <Cell $c={4} $r={2} $right={G} $bottom={G}>
      <ClippedText><span>g</span><span>g</span></ClippedText>
    </Cell>
    <Cell $c={5} $r={2} $right={B} $bottom={G} />
    <Cell $c={6} $r={2} $right={B} $bottom={B} />
    <Cell $c={7} $r={2} $right={B} $bottom={B} />
    <Cell $c={8} $r={2} $right={B} $bottom={B} />
    <EmptyCells row={2} from={9} to={12} />

    <Cell $c={2} $r={3} $right={G} $bottom={B} $font={boldSerif} $pt={3}>15</Cell>
    <Cell $c={3} $r={3} $right={G} $bottom={B} />
    <Cell $c={4} $r={3} $right={G} $bottom={B} $align="flex-start" $font={`18px ${SERIF}`} $pt={5}>
      {"…".repeat(10)}
    </Cell>
    <Cell $c={5} $r={3} $right={B} $bottom={B} $pt={3}>5-10</Cell>
    <Cell $c={6} $r={3} $right={B} $bottom={B} />
    <Cell $c={7} $r={3} $right={B} $bottom={B} />
    <Cell $c={8} $r={3} $right={B} $bottom={B} />
    <EmptyCells row={3} from={9} to={12} />

    <Cell $c={2} $r={4} $span={4} $right={B} $bottom={B} $font={boldSerif} $pt={2} $track={0.1}>Tổng điểm:</Cell>
    <Cell $c={6} $r={4} $right={B} $bottom={B} $align="flex-start" $pt={2} $track={-0.12}>(1)+(2)+(3)+(4)+(5)</Cell>
    <Cell $c={7} $r={4} $right={B} $bottom={B} />
    <Cell $c={8} $r={4} $right={B} $bottom={B} $align="flex-end" $font={`21.67px ${SANS}`} $pt={2}>30</Cell>
    <EmptyCells row={4} from={9} to={12} />

    <Cell $c={2} $r={5} $span={7} $align="flex-start">
      <Notes>
        <NoteTitle>{"Ghi chú: "}</NoteTitle>
        {notes.map(([text, track]) => (
          <NoteLine key={text} $track={track}>{text}</NoteLine>
        ))}
      </Notes>
    </Cell>
    <EmptyCells row={5} from={9} to={12} />

    <EmptyCells row={6} from={2} to={4} />
    <Cell $c={5} $r={6} $span={4} $valign="flex-end" $font={italicSerif} $track={0.25}>
      {"Đà Nẵng, ngày" + " ".repeat(14) + "tháng" + " ".repeat(11) + "năm 2023"}
    </Cell>
    <EmptyCells row={6} from={9} to={12} />

    <EmptyCells row={7} from={2} to={2} />
    <Cell $c={3} $r={7} $span={2} $font={boldSerif} $pt={2} $track={0.42}>BAN CÁN SỰ LỚP/LỚP TRƯỞNG</Cell>
    <Cell $c={5} $r={7} $span={4} $font={boldSerif} $pt={2} $track={0.3}>NGƯỜI ĐÁNH GIÁ</Cell>
    <EmptyCells row={7} from={9} to={12} />

    <EmptyCells row={8} from={2} to={2} />
    <Cell $c={3} $r={8} $span={2} $font={italicSerif} $pt={5} $track={0.2}>{"(ký, ghi rõ họ tên) "}</Cell>
    <Cell $c={5} $r={8} $span={4} $font={italicSerif} $pt={2} $track={0.2}>{"(ký, ghi rõ họ tên) "}</Cell>
    <EmptyCells row={8} from={9} to={12} />

    <Cell $c={2} $r={9} />
    <EmptyCells row={9} from={4} to={12} />
    {[10, 11, 12, 13, 14, 15].map((r) => (
      <EmptyCells key={r} row={r} from={2} to={12} />
    ))}
    <Cell $c={3} $r={9}><Selection /></Cell>
  </Sheet>
);

/* ---------- page ---------- */

const tabs: [string, number][] = [
  ["File", 57], ["Home", 70], ["Insert", 67], ["Page Layout", 117], ["Formulas", 93],
  ["Data", 60], ["Review", 77], ["View", 60], ["Automate", 99], ["Help", 50],
];

export default function App() {
  return (
    <Screen>
      <GlobalStyle />
      <TitleBar>
        <FileName>
          <ExcelIcon size={20} />
          <span>{"TranThienHoangDat-106210081.xlsx  -  Excel"}</span>
        </FileName>
        <SearchBox>
          <svg width="18" height="19" viewBox="0 0 18 19" fill="none" stroke="#555" strokeWidth="1.400">
            <circle cx="11.500" cy="6.500" r="5.700" /><path d="M7.500 10.700.7 18" />
          </svg>
          Search
        </SearchBox>
        <WindowTools>
          <span>Trần Thiện Hoàng Đạt</span>
          <Avatar>TT</Avatar>
          <svg width="20" height="21" viewBox="0 0 20 21" fill="none" stroke="#333" strokeWidth="1.300">
            <path d="M10 3.500 17 10.500 3 19.500.8 18.500z" fill="#fff" />
            <path d="M7 17c1.500 2.500 5.500 1.500 5-3" />
            <path d="M12.500 3.500 13 .5M15.500 5 19 1.500M16.500 8l3-.5" stroke={BLUE} />
          </svg>
          <WindowButton $gap={42}>
            <svg width="12" height="2" viewBox="0 0 12 2"><path d="M0 1h12" stroke="#222" strokeWidth="1.400" /></svg>
          </WindowButton>
          <WindowButton $gap={48}>
            <svg width="13" height="13" viewBox="0 0 13 13" fill="none" stroke="#222" strokeWidth="1.300">
              <rect x="0.700" y="3" width="9.300" height="9.300" rx="1.800" />
              <path d="M3 2.800C3 1.500 3.600.7 5 .7h4.500c2 0 2.800.8 2.800 2.800V8c0 1.300-.8 2-2 2" />
            </svg>
          </WindowButton>
          <WindowButton $gap={47}>
            <svg width="13" height="13" viewBox="0 0 13 13" stroke="#222" strokeWidth="1.300"><path d="m.5.5 12 12M12.500.5l-12 12" /></svg>
          </WindowButton>
        </WindowTools>
      </TitleBar>

      <TabStrip>
        {tabs.map(([t, w]) => (
          <Tab key={t} $w={w} $active={t === "Home"}>{t}</Tab>
        ))}
        <CommentsButton>
          <svg width="14" height="14" viewBox="0 0 14 14" fill="none" stroke="#333" strokeWidth="1.200">
            <path d="M.7 1h12.600v8.500H6L3 12.700V9.500H.7z" />
          </svg>
          Comments
        </CommentsButton>
        <ShareButton>
          <svg width="14" height="15" viewBox="0 0 14 15" fill="none" stroke="#fff" strokeWidth="1.200">
            <path d="M3 5H.7v9.300h11.600V10" /><path d="M3 10.500C3.500 6.500 6 4.500 9 4.500V1.200l4.400 4.300L9 9.800V7C6.500 7 4.500 8 3 10.500z" />
          </svg>
          Share
          <Chevron color="#fff" />
        </ShareButton>
      </TabStrip>

      <Ribbon>
        <Group $w={216}>
          <GroupBody $pl={8}>
            <BigButton $w={66} $drop={1}>
              <PasteIcon />
              <BigLine>Paste</BigLine>
              <BigLine><Chevron /></BigLine>
            </BigButton>
            <SmallList>
              <SmallRow $gap={2}><IconBox><CutIcon /></IconBox><span>Cut</span></SmallRow>
              <SmallRow $gap={2} $chev={16}><IconBox><CopyIcon /></IconBox><span>Copy</span><Chevron /></SmallRow>
              <SmallRow $gap={2}><IconBox><PainterIcon /></IconBox><span>Format Painter</span></SmallRow>
            </SmallList>
          </GroupBody>
          <GroupFooter $pl={4}><span>Clipboard</span><Launcher /></GroupFooter>
        </Group>

        <Group $w={292}>
          <GroupBody $pl={10}>
            <Stack>
              <Line>
                <Combo $w={144}>Arial<Chevron /></Combo>
                <Combo $w={62}>11<Chevron /></Combo>
                <Slot $w={36}><GrowFont /></Slot>
                <Slot $w={30}><GrowFont down /></Slot>
              </Line>
              <Line>
                <Slot $w={30}><Glyph $size={17} $weight={700}>B</Glyph></Slot>
                <Slot $w={34}><Glyph $size={19} $italic $serif>I</Glyph></Slot>
                <Slot $w={28}>
                  <svg width="12" height="18" viewBox="0 0 12 18" fill="none" stroke="#444" strokeWidth="1.400">
                    <path d="M1.500 1v7.500c0 5 9 5 9 0V1M0 16.500h12" />
                  </svg>
                </Slot>
                <Slot $w={20}><Chevron /></Slot>
                <Slot $w={6}><Divider /></Slot>
                <Slot $w={29}><BordersIcon /></Slot>
                <Slot $w={18}><Chevron /></Slot>
                <Slot $w={8}><Divider /></Slot>
                <Slot $w={28}><FillColorIcon /></Slot>
                <Slot $w={20}><Chevron /></Slot>
                <Slot $w={34}><FontColorIcon /></Slot>
                <Slot $w={12}><Chevron /></Slot>
              </Line>
            </Stack>
          </GroupBody>
          <GroupFooter><span>Font</span><Launcher /></GroupFooter>
        </Group>

        <Group $w={363}>
          <GroupBody $pl={9}>
            <Stack>
              <Line>
                <Slot $w={32}><Bars rows={threeBars} dy={-3} /></Slot>
                <Slot $w={32}><Bars rows={threeBars} /></Slot>
                <Slot $w={32}><Pressed><Bars rows={threeBars} dy={3} /></Pressed></Slot>
                <Slot $w={3}><Divider /></Slot>
                <Slot $w={32}><OrientIcon /></Slot>
                <Slot $w={10}><Chevron /></Slot>
              </Line>
              <Line>
                <Slot $w={32}><Bars rows={[[0, 18, 1], [0, 12, 6.3], [0, 18, 11.6], [0, 12, 17]]} /></Slot>
                <Slot $w={32}><Bars rows={[[0, 18, 1], [3, 15, 6.3], [0, 18, 11.6], [3, 15, 17]]} /></Slot>
                <Slot $w={32}><Bars rows={[[0, 18, 1], [6, 18, 6.3], [0, 18, 11.6], [6, 18, 17]]} /></Slot>
                <Slot $w={3}><Divider /></Slot>
                <Slot $w={32}><IndentIcon /></Slot>
                <Slot $w={32}><IndentIcon right /></Slot>
              </Line>
            </Stack>
            <TallDivider $w={14}><Divider $h={78} /></TallDivider>
            <Stack>
              <Line><Slot $w={30}><WrapIcon /></Slot>Wrap Text</Line>
              <Line><Slot $w={30}><MergeIcon /></Slot>Merge &amp; Center<Slot $w={40}><Chevron /></Slot></Line>
            </Stack>
          </GroupBody>
          <GroupFooter><span>Alignment</span><Launcher /></GroupFooter>
        </Group>

        <Group $w={200}>
          <GroupBody $pl={10}>
            <Stack>
              <Line><Combo $w={180}>Text<Chevron /></Combo></Line>
              <Line>
                <Slot $w={30}><CurrencyIcon /></Slot>
                <Slot $w={16}><Chevron /></Slot>
                <Slot $w={40}><Glyph $size={23}>%</Glyph></Slot>
                <Slot $w={24}>
                  <svg width="10" height="17" viewBox="0 0 10 17"><path d="M5 0c6 0 6.500 12-3.500 16.500L1 15.500c4-2.500 5-5 4.500-6.500C-1 9.500-1 0 5 0z" fill="#333" /></svg>
                </Slot>
                <Slot $w={10}><Divider /></Slot>
                <Slot $w={25}><DecimalIcon /></Slot>
                <Slot $w={39}><DecimalIcon less /></Slot>
              </Line>
            </Stack>
          </GroupBody>
          <GroupFooter><span>Number</span><Launcher /></GroupFooter>
        </Group>

        <Group $w={243}>
          <GroupBody $pl={11}>
            <BigButton $w={88}><CondFormatIcon /><BigLine>Conditional</BigLine><BigLine>Formatting <Chevron /></BigLine></BigButton>
            <BigButton $w={79}><TableIcon /><BigLine>Format as</BigLine><BigLine>Table <Chevron /></BigLine></BigButton>
            <BigButton $w={52}><CellStylesIcon /><BigLine>Cell</BigLine><BigLine>Styles <Chevron /></BigLine></BigButton>
          </GroupBody>
          <GroupFooter><span>Styles</span></GroupFooter>
        </Group>

        <Group $w={180}>
          <GroupBody $pl={6}>
            <BigButton $w={60} $drop={2}><InsertIcon /><BigLine>Insert</BigLine><BigLine><Chevron /></BigLine></BigButton>
            <BigButton $w={48} $drop={2}><DeleteIcon /><BigLine>Delete</BigLine><BigLine><Chevron /></BigLine></BigButton>
            <BigButton $w={58}><FormatIcon /><BigLine>Format</BigLine><BigLine><Chevron /></BigLine></BigButton>
          </GroupBody>
          <GroupFooter><span>Cells</span></GroupFooter>
        </Group>

        <Group $w={257}>
          <GroupBody $pl={14}>
            <SmallList $w={115}>
              <SmallRow $gap={4} $chev={16}><IconBox><SumIcon /></IconBox><span>AutoSum</span><Chevron /></SmallRow>
              <SmallRow $gap={4} $chev={5}><IconBox><FillIcon /></IconBox><span>Fill</span><Chevron /></SmallRow>
              <SmallRow $gap={4} $chev={4}><IconBox><ClearIcon /></IconBox><span>Clear</span><Chevron /></SmallRow>
            </SmallList>
            <BigButton $w={60}><SortIcon /><BigLine>Sort &amp;</BigLine><BigLine>Filter <Chevron /></BigLine></BigButton>
            <BigButton $w={54}><FindIcon /><BigLine>Find &amp;</BigLine><BigLine>Select <Chevron /></BigLine></BigButton>
          </GroupBody>
          <GroupFooter><span>Editing</span></GroupFooter>
        </Group>

        <Group $w={77}>
          <GroupBody>
            <BigButton $w={76}><AnalyzeIcon /><BigLine>Analyze</BigLine><BigLine>Data</BigLine></BigButton>
          </GroupBody>
          <GroupFooter><span>Analysis</span></GroupFooter>
        </Group>
        <CollapseSpot><Chevron size={13} /></CollapseSpot>
      </Ribbon>

      <FormulaBar>
        <NameBox $w={126}>B27<Chevron size={12} /></NameBox>
        <Slot $w={26}><Dots /></Slot>
        <FxBox $w={91}>
          <svg width="15" height="15" viewBox="0 0 15 15" stroke="#aaa" strokeWidth="1.300"><path d="m.5.5 14 14M14.500.5l-14 14" /></svg>
          <svg width="17" height="13" viewBox="0 0 17 13" fill="none" stroke="#aaa" strokeWidth="1.300"><path d="m.5 7 5 5.200L16.500.8" /></svg>
          <Fx>fx</Fx>
        </FxBox>
        <FormulaInput><Chevron size={13} /></FormulaInput>
      </FormulaBar>

      <Workspace>
        <SheetGrid />
        <VScroll>
          <svg width="12" height="8" viewBox="0 0 12 8"><path d="M6 .5 11.500 7.500H.5z" fill="#606060" stroke="#606060" strokeLinejoin="round" /></svg>
          <VThumb />
          <svg width="12" height="8" viewBox="0 0 12 8"><path d="M6 7.500 11.500.5H.5z" fill="#606060" stroke="#606060" strokeLinejoin="round" /></svg>
        </VScroll>
      </Workspace>

      <SheetBar>
        <SheetNav>
          <svg width="8" height="13" viewBox="0 0 8 13" fill="none" stroke="#8a8a8a" strokeWidth="1.300"><path d="M7 .5 1 6.500l6 6" /></svg>
          <svg width="8" height="13" viewBox="0 0 8 13" fill="none" stroke="#8a8a8a" strokeWidth="1.300"><path d="m1 .5 6 6-6 6" /></svg>
        </SheetNav>
        <SheetTab>Sheet2</SheetTab>
        <TabDivider />
        <AddSheet>
          <svg width="15" height="15" viewBox="0 0 15 15" stroke="#777" strokeWidth="1.300"><path d="M7.500 0v15M0 7.500h15" /></svg>
        </AddSheet>
        <HDots><Dots /></HDots>
        <HScroll>
          <svg width="9" height="11" viewBox="0 0 9 11"><path d="M8.500.5v10L.5 5.500z" fill="#606060" /></svg>
          <HThumb />
          <svg width="9" height="11" viewBox="0 0 9 11"><path d="M.5.500v10l8-5z" fill="#606060" /></svg>
        </HScroll>
      </SheetBar>

      <StatusBar>
        <Ready>Ready</Ready>
        <svg width="18" height="18" viewBox="0 0 18 18" fill="none" stroke="#333" strokeWidth="1.300" strokeLinejoin="round">
          <circle cx="8" cy="2.800" r="2.200" />
          <path d="M5 4.500 1.500 3C.5 4.500 2 5.500 5 7v4l-2 5.500c1 1.500 2 .5 2.500 0L8 11.500M11 4.500 14.500 3c1 1.500-.5 2.500-3.500 4v2.500M9.500 10.500l7 7M16.500 10.500l-7 7" />
        </svg>
        <Accessibility>Accessibility: Investigate</Accessibility>
        <ViewMode $on>
          <svg width="17" height="17" viewBox="0 0 17 17" fill="none" stroke="#333" strokeWidth="1.400"><path d="M.7.700h15.600v15.600H.7zM5.900.700v15.600M11.100.700v15.600M.7 5.900h15.600M.7 11.100h15.600" /></svg>
        </ViewMode>
        <ViewMode>
          <svg width="18" height="17" viewBox="0 0 18 17" fill="none" stroke="#333" strokeWidth="1.300"><path d="M.7.700h16.600v15.600H.7zM4 3h10v11H4zM6 6h6M6 8.500h6M6 11h6" /></svg>
        </ViewMode>
        <ViewMode>
          <svg width="18" height="17" viewBox="0 0 18 17" fill="none" stroke="#333" strokeWidth="1.300"><path d="M.7.700h16.600v15.600H.7zM.7 10.500h11V.700M6 .700v9.800" /></svg>
        </ViewMode>
        <ZoomMinus>
          <svg width="11" height="2" viewBox="0 0 11 2"><path d="M0 1h11" stroke="#333" strokeWidth="1.300" /></svg>
        </ZoomMinus>
        <ZoomTrack><i /></ZoomTrack>
        <svg width="10" height="10" viewBox="0 0 10 10"><path d="M5 0v10M0 5h10" stroke="#333" strokeWidth="1.200" /></svg>
        <ZoomValue>100%</ZoomValue>
      </StatusBar>

      <Taskbar>
        <Weather>
          <WeatherIcon />
          <div><p>34°C</p><p>Partly sunny</p></div>
        </Weather>
        <WindowsIcon />
        <TaskSearch>
          <svg width="19" height="19" viewBox="0 0 19 19" fill="none" stroke="#222" strokeWidth="2"><circle cx="8" cy="8" r="6.500" /><path d="m12.700 12.700 5.500 5.500" /></svg>
          Search
          <SearchArt />
        </TaskSearch>
        <TaskItem><TaskViewIcon /></TaskItem>
        <TaskItem><ChatIcon /></TaskItem>
        <TaskItem $mark="#828286"><FolderIcon /></TaskItem>
        <TaskItem $mark="#828286"><ChromeIcon /></TaskItem>
        <TaskItem><MongoIcon /></TaskItem>
        <TaskItem><TerminalIcon /></TaskItem>
        <TaskItem $mark="#828286"><CodeIcon /></TaskItem>
        <TaskItem $active $mark="#06b7c3"><ExcelIcon size={30} /></TaskItem>
        <Tray>
          <Chevron size={14} up />
          <TrayCloud><OneDriveIcon /></TrayCloud>
          <Language>AFR</Language>
          <WifiIcon />
          <SoundIcon />
          <BatteryIcon />
          <Clock>16:38<br />30/07/2023</Clock>
          <Badge>1</Badge>
        </Tray>
      </Taskbar>
    </Screen>
  );
}
